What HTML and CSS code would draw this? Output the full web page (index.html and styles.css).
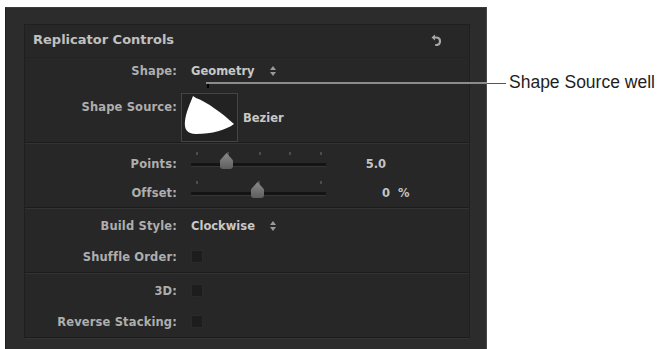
FILE: index.html
```html
<!DOCTYPE html>
<html>
<head>
<meta charset="utf-8">
<link rel="stylesheet" href="styles.css">
</head>
<body>
<div class="page">
  <div class="outer">
    <div class="inner">
      <div class="title-row">
        <span class="title">Replicator Controls</span>
        <svg class="reset" width="10" height="12" viewBox="0 0 10 12"><path d="M4 0.5 L0.5 3.5 L4 6.5 Z" fill="#a8a8a8"/><path d="M3 3.5 H5.2 C7.6 3.5 9 5.2 9 7.2 C9 9.4 7.4 11 5.2 11 H4.2" fill="none" stroke="#a8a8a8" stroke-width="2.2"/></svg>
      </div>
      <div class="section s1">
        <div class="row r-shape">
          <span class="label">Shape:</span>
          <span class="value popup">Geometry<svg class="updown" width="6" height="10" viewBox="0 0 6 10"><path d="M3 0 L6 4 H0 Z M0 6 H6 L3 10 Z" fill="#9a9a9a"/></svg></span>
        </div>
        <div class="row r-source">
          <span class="label">Shape Source:</span>
          <span class="value source">
            <span class="well"><svg width="55" height="47" viewBox="0 0 55 47"><path d="M11 2 L14 4 C25 8 40 19 52 30 C44 36 30 40 14 40 C5 40 2 35 3 27 C4 18 8 10 11 2 Z" fill="#ffffff"/></svg></span>
            <span class="bezier">Bezier</span>
          </span>
        </div>
      </div>
      <div class="section s2">
        <div class="row">
          <span class="label">Points:</span>
          <span class="value sliderbox">
            <span class="slider">
              <span class="tick" style="left:5px"></span>
              <span class="tick" style="left:36px"></span>
              <span class="tick" style="left:68px"></span>
              <span class="tick" style="left:98px"></span>
              <span class="tick" style="left:129px"></span>
              <span class="track"></span>
              <span class="thumb" style="left:29px"></span>
            </span>
            <span class="num num-pts">5.0</span>
          </span>
        </div>
        <div class="row">
          <span class="label">Offset:</span>
          <span class="value sliderbox">
            <span class="slider">
              <span class="tick" style="left:5px"></span>
              <span class="tick" style="left:67px"></span>
              <span class="tick" style="left:129px"></span>
              <span class="track"></span>
              <span class="thumb" style="left:60px"></span>
            </span>
            <span class="num">0</span><span class="unit">%</span>
          </span>
        </div>
      </div>
      <div class="section s3">
        <div class="row">
          <span class="label">Build Style:</span>
          <span class="value popup">Clockwise<svg class="updown" width="6" height="10" viewBox="0 0 6 10"><path d="M3 0 L6 4 H0 Z M0 6 H6 L3 10 Z" fill="#9a9a9a"/></svg></span>
        </div>
        <div class="row">
          <span class="label">Shuffle Order:</span>
          <span class="value"><span class="check"></span></span>
        </div>
      </div>
      <div class="section s4">
        <div class="row">
          <span class="label">3D:</span>
          <span class="value"><span class="check"></span></span>
        </div>
        <div class="row">
          <span class="label">Reverse Stacking:</span>
          <span class="value"><span class="check"></span></span>
        </div>
      </div>
    </div>
  </div>
  <div class="callout">
    <span class="pointer"></span>
    <span class="line-in"></span>
    <span class="line-out"></span>
    <span class="callout-text">Shape Source well</span>
  </div>
</div>
</body>
</html>
```
FILE: styles.css
```css
html, body {
  margin: 0;
  padding: 0;
  background: #ffffff;
}
.page {
  position: relative;
  width: 659px;
  height: 349px;
  overflow: hidden;
}
.outer {
  margin: 7px 0 0 5px;
  width: 482px;
  height: 342px;
  box-sizing: border-box;
  background: #2c2c2c;
  border-left: 1px solid #1e1e1e;
  border-top: 1px solid #3a3a3a;
  border-right: 1px solid #4a4a4a;
  padding: 16px 16px 0 18px;
}
.inner {
  width: 446px;
  box-sizing: border-box;
  background: #272727;
  border: 1px solid #1f1f1f;
  border-bottom: none;
  font-family: "DejaVu Sans", sans-serif;
  font-weight: bold;
  font-size: 11.5px;
}
.title-row {
  height: 32px;
  display: flex;
  align-items: center;
  justify-content: space-between;
  padding: 0 28px 0 8px;
  border-bottom: 1px solid #232323;
}
.title {
  font-size: 13px;
  color: #c0c0c0;
  margin-top: -4px;
}
.reset {
  margin-top: -2px;
}
.section {
  border-bottom: 1px solid #1c1c1c;
  box-shadow: 0 1px 0 #333333;
}
.s2 { padding-top: 6px; }
.s2 .row { height: 29px; }
.s3 { padding-top: 2px; }
.s3 .row { height: 31px; }
.s4 { padding-top: 2px; }
.s4 .row { height: 31px; }
.row {
  display: grid;
  grid-template-columns: 152px 1fr;
  column-gap: 14px;
  align-items: center;
  height: 30px;
}
.label {
  text-align: right;
  color: #aeaeae;
  white-space: nowrap;
  letter-spacing: 0.15px;
}
.value {
  color: #c8c8c8;
  display: flex;
  align-items: center;
  white-space: nowrap;
}
.r-shape {
  height: 26px;
}
.popup .updown {
  margin-left: 15px;
}
.r-source {
  height: auto;
  align-items: start;
  padding-top: 9px;
}
.r-source .label {
  margin-top: 7px;
}
.source {
  margin-left: -10px;
}
.well {
  width: 55px;
  height: 47px;
  border: 1px solid #444444;
  background: #222222;
  display: block;
}
.well svg { display: block; }
.bezier {
  margin-left: 5px;
  align-self: center;
}
.slider {
  position: relative;
  width: 135px;
  height: 29px;
  display: block;
}
.track {
  position: absolute;
  left: 0;
  right: 0;
  top: 14px;
  height: 3px;
  background: #141414;
  border-bottom: 1px solid #363636;
}
.tick {
  position: absolute;
  top: 3px;
  width: 2px;
  height: 3px;
  background: #4c4c4c;
}
.thumb {
  position: absolute;
  top: 4px;
  width: 13px;
  height: 16px;
  background: linear-gradient(#8a8a8a, #5e5e5e);
  clip-path: polygon(50% 0, 100% 45%, 100% 100%, 0 100%, 0 45%);
  border-radius: 0 0 3px 3px;
}
.num {
  width: 64px;
  text-align: right;
  color: #c4c4c4;
}
.num-pts {
  width: 60px;
}
.unit {
  margin-left: 8px;
  color: #c4c4c4;
}
.check {
  display: block;
  width: 10px;
  height: 11px;
  background: #1d1d1d;
  border: 1px solid #2a2a2a;
}
.callout {
  position: absolute;
  left: 0;
  top: 0;
}
.pointer {
  position: absolute;
  left: 207px;
  top: 84px;
  width: 2px;
  height: 4px;
  background: #000000;
}
.line-in {
  position: absolute;
  left: 206px;
  top: 82px;
  width: 281px;
  height: 2px;
  background: #8c8c8c;
}
.line-out {
  position: absolute;
  left: 487px;
  top: 83px;
  width: 19px;
  height: 1px;
  background: #555555;
}
.callout-text {
  position: absolute;
  left: 509px;
  top: 72px;
  font-family: "Liberation Sans", Arial, sans-serif;
  font-size: 17.5px;
  color: #1e1e1e;
  white-space: nowrap;
}
```
